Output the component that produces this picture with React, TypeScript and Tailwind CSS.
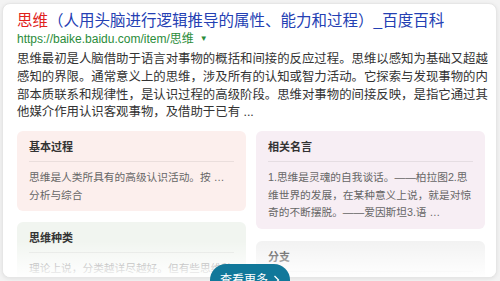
import React from 'react';

const font = { fontFamily: '"Liberation Sans", "Noto Sans CJK SC", sans-serif' };

const lines = [
    '思维最初是人脑借助于语言对事物的概括和间接的反应过程。思维以感知为基础又超越',
    '感知的界限。通常意义上的思维，涉及所有的认知或智力活动。它探索与发现事物的内',
    '部本质联系和规律性，是认识过程的高级阶段。思维对事物的间接反映，是指它通过其',
    '他媒介作用认识客观事物，及借助于已有 ...',
];

function InfoCard({ title, bg, children }: { title: string; bg: string; children?: React.ReactNode }) {
    return (
        <div className={`${bg} rounded-[6px] px-[12px] pt-[8px] pb-[7px]`}>
            <h4 className="text-[11px] leading-[16px] font-bold text-[#333]">{title}</h4>
            {children && (
                <>
                    <div className="h-px bg-black/[0.07] mt-[6px]" />
                    <p className="mt-[7px] text-[10.7px] leading-[17.5px] text-[#666]">{children}</p>
                </>
            )}
        </div>
    );
}

export default function App() {
    return (
        <div className="relative w-[500px] h-[281px] overflow-hidden bg-[#f3f3f3]" style={font}>
            <div className="relative ml-[2px] mt-[3px] w-[495px] h-[275px] bg-white rounded-[8px] border border-[#e6e6e6] shadow-[0_1px_4px_rgba(0,0,0,0.08)] overflow-hidden">
                <div className="pl-[14px] pr-[10px] pt-[7px]">
                    <h3 className="text-[15.5px] leading-[20px] whitespace-nowrap">
                        <span className="text-[#e0211b]">思维</span>
                        <span className="text-[#2440b3]">（人用头脑进行逻辑推导的属性、能力和过程）_百度百科</span>
                    </h3>
                    <div className="flex items-center gap-[6px] text-[12px] leading-[16px] text-[#2a8c3a]">
                        <span>https://baike.baidu.com/item/思维</span>
                        <span className="text-[8px]">▼</span>
                    </div>
                    <div className="mt-[4px] text-[12.4px] leading-[17.8px] text-[#333] whitespace-nowrap">
                        {lines.map((l) => (
                            <div key={l}>{l}</div>
                        ))}
                    </div>

                    <div className="grid grid-cols-2 gap-[10px] mt-[9px] pr-[1px]">
                        <div className="flex flex-col gap-[11px]">
                            <InfoCard title="基本过程" bg="bg-[#fcefed]">
                                思维是人类所具有的高级认识活动。按 …<br />分析与综合
                            </InfoCard>
                            <InfoCard title="思维种类" bg="bg-[#f1f5f0]">
                                理论上说，分类越详尽越好。但有些思维种类
                            </InfoCard>
                        </div>
                        <div className="flex flex-col gap-[12px]">
                            <InfoCard title="相关名言" bg="bg-[#f7eef4]">
                                1.思维是灵魂的自我谈话。——柏拉图2.思维世界的发展，在某种意义上说，就是对惊奇的不断摆脱。——爱因斯坦3.语 …
                            </InfoCard>
                            <InfoCard title="分支" bg="bg-[#f2f2f2]">
                                思维导图
                            </InfoCard>
                        </div>
                    </div>
                </div>
                <div className="absolute left-0 right-0 bottom-0 h-[36px] bg-gradient-to-b from-white/0 via-white/50 to-white/95" />
            </div>
            <button className="absolute left-1/2 -translate-x-1/2 top-[264px] w-[80px] h-[32px] rounded-full bg-[#11789a] text-white text-[12px] flex items-center justify-center gap-[5px]">
                <span>查看更多</span>
                <svg width="7" height="10" viewBox="0 0 7 10" fill="none" stroke="white" strokeWidth="1.3">
                    <path d="M1.5 1l4 4-4 4" />
                </svg>
            </button>
        </div>
    );
}
